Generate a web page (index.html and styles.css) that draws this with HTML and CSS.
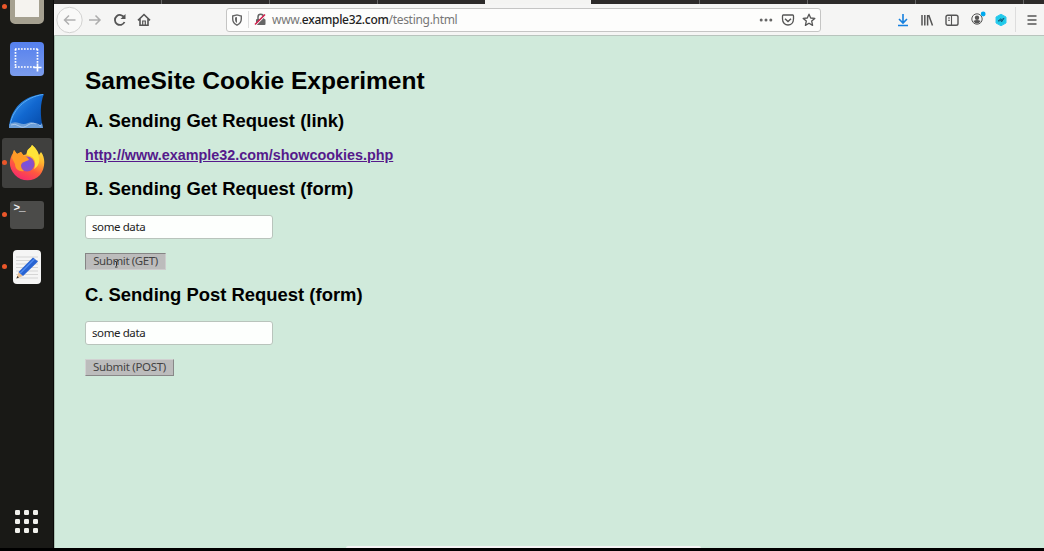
FILE: index.html
```html
<!DOCTYPE html>
<html lang="en">
<head>
<meta charset="utf-8">
<title>SameSite Cookie Experiment</title>
<link rel="stylesheet" href="styles.css">
</head>
<body>
<div class="desktop">
  <aside class="dock">
    <div class="app files"><i class="dot"></i><span class="folder"></span></div>
    <div class="app shot">
      <svg width="36" height="36" viewBox="0 0 36 36"><defs><linearGradient id="s" x2="0" y2="1"><stop stop-color="#5580ee"/><stop offset="1" stop-color="#7b9cec"/></linearGradient></defs><rect x="1" y="1" width="34" height="34" rx="4" fill="url(#s)"/><path d="M6 8H29M6 26H26M6.500 8V27M28.500 8V22" fill="none" stroke="#fff" stroke-width="1.700" stroke-dasharray="1.700 1.300"/><path d="M28.500 22.500V30.500M24.500 26.500H32.500" stroke="#fff" stroke-width="1.700"/></svg>
    </div>
    <div class="app fin">
      <svg width="38" height="36" viewBox="0 0 38 36"><defs><linearGradient id="f" x1="0" y1="0" x2="1" y2="1"><stop stop-color="#42a0f4"/><stop offset=".5" stop-color="#1268d0"/><stop offset="1" stop-color="#0548a5"/></linearGradient></defs><path d="M1 35C2 16 16 2 36 1C32 10 32 23 35 35Z" fill="url(#f)"/><path d="M2 34C3 18 17 4 35 1.500" fill="none" stroke="#5aacf3"/><path d="M1.500 31Q6 28 11 30T20 30T28 31T34 30L35 35H1Z" fill="#6d9fd8"/><path d="M3 32Q7 30 11 33T20 32T33 33" fill="none" stroke="#bad2ed" stroke-width=".8"/></svg>
    </div>
    <div class="app firefox active"><i class="dot"></i>
      <svg width="36" height="38" viewBox="0 0 36 38"><defs><linearGradient id="o" x1=".75" y1="0" x2=".3" y2="1"><stop stop-color="#fff044"/><stop offset=".35" stop-color="#ffb52e"/><stop offset=".65" stop-color="#ff593e"/><stop offset="1" stop-color="#f52770"/></linearGradient><radialGradient id="p"><stop stop-color="#7251e8"/><stop offset="1" stop-color="#9350b8"/></radialGradient></defs><path d="M23 1C28 5 29 8 30 11L32 8C37 14 36 25 31 31C25 38 12 38 6 31C-1 24 0 15 4 9L5 6L8 10L12 8L14 11C17 11 18 10 18 8C18 5 22 4 23 1Z" fill="url(#o)"/><path d="M18 8C19 5 22 4 23 1C28 6 29 9 30 14C31 20 28 23 25 25C28 18 25 13 21 12C18 11 17 10 18 8Z" fill="#ffe339"/><circle cx="18" cy="20" r="7.500" fill="url(#p)"/><path d="M5 6L8 10L12 8L15 12Q19 13 20 16Q17 17 15 18C11 19 11 24 15 27C10 28 6 25 6 20L3 14Z" fill="#ff9b27"/></svg>
    </div>
    <div class="app term"><i class="dot"></i><span class="screen">&gt;_</span></div>
    <div class="app editor"><i class="dot"></i>
      <svg width="30" height="36" viewBox="0 0 30 36"><rect x="1" y="1" width="28" height="34" rx="4" fill="#f5f5f5"/><path d="M4 8H26M4 11.500H26M4 15H26M4 18.500H26M4 22H26M4 25.500H26M4 29H26" stroke="#d5d5d5"/><path d="M4.500 29.500L6.500 23L11 27Z" fill="#eabf91"/><path d="M4.500 29.500L5.300 27L7 28.600Z" fill="#333"/><path d="M6.500 23L21 8.500L26 12.500L11 27Z" fill="#2863d2"/><path d="M8 24.500L22.500 10" stroke="#4e8af0" stroke-width="1.500"/></svg>
    </div>
    <svg class="grid" width="26" height="26" viewBox="0 0 26 26" fill="#f1f1ec"><g id="r"><rect x="1" y="1" width="5" height="5" rx="1.200"/><rect x="10" y="1" width="5" height="5" rx="1.200"/><rect x="19" y="1" width="5" height="5" rx="1.200"/></g><use href="#r" y="9"/><use href="#r" y="18"/></svg>
  </aside>
  <main class="browser">
    <div class="tabs"><i class="t1"></i><i class="t2"></i><i class="t3"></i><i class="t4"></i><i class="current"></i><i class="t5"></i><i class="t6"></i><i class="t7"></i><i class="t8"></i><i class="t9"></i></div>
    <nav class="toolbar">
      <svg class="back" width="28" height="28" viewBox="0 0 28 28" fill="none"><circle cx="14.500" cy="14" r="12.700" fill="#f9f9f8" stroke="#d2d2d1"/><path d="M20.500 14H9.500M14 9.500L9.500 14L14 18.500" stroke="#b0b0b0" stroke-width="1.500"/></svg>
      <svg class="forward" width="14" height="14" viewBox="0 0 14 14" fill="none" stroke="#adadad" stroke-width="1.500"><path d="M1 7H12M7.500 2.500L12 7L7.500 11.500"/></svg>
      <svg class="reload" width="14" height="14" viewBox="0 0 14 14" fill="none" stroke="#555" stroke-width="1.800"><path d="M11.300 4.500A5 5 0 1 0 11.500 9"/><path d="M12.500 1V6H7.500Z" fill="#555" stroke="none"/></svg>
      <svg class="home" width="14" height="14" viewBox="0 0 14 14" fill="none" stroke="#555" stroke-width="1.600"><path d="M1 7.300L7 1.500L13 7.300M3 6V12.300H11V6"/><path d="M5.700 12V8H8.300V12" stroke-width="1.200"/></svg>
      <div class="address">
        <svg class="shield" width="12" height="12" viewBox="0 0 12 12" fill="none" stroke="#666"><path d="M1.700 2L6 .9L10.300 2V5C10.300 8.500 8.500 10 6 11.200C3.500 10 1.700 8.500 1.700 5Z" stroke-width="1.400"/><path d="M6 3V9C4.500 8 4 7 4 5V3.500Z" fill="#666" stroke="none"/></svg>
        <i class="rule"></i>
        <svg class="lock" width="13" height="13" viewBox="0 0 13 13"><rect x="2" y="6" width="9.500" height="6" rx="1" fill="#666"/><path d="M4 6V4A2.700 2.700 0 0 1 9.400 4V6" fill="none" stroke="#666" stroke-width="1.500"/><path d="M1.800 12L11.800 2" stroke="#fdfdfc" stroke-width="1.200"/><path d="M1 11.500L11 1.500" stroke="#d32350" stroke-width="1.600"/></svg>
        <span class="url">www.<b>example32.com</b>/testing.html</span>
        <svg class="more" width="14" height="4" viewBox="0 0 14 4" fill="#666"><circle cx="2.200" cy="2" r="1.500"/><circle cx="7" cy="2" r="1.500"/><circle cx="11.800" cy="2" r="1.500"/></svg>
        <svg class="pocket" width="14" height="14" viewBox="0 0 14 14" fill="none" stroke="#555" stroke-width="1.300"><path d="M2.300 2H11.700Q12.500 2 12.500 3V6C12.500 14 1.500 14 1.500 6V3Q1.500 2 2.300 2Z"/><path d="M4 5.800L7 8.500L10 5.800" stroke-width="1.500"/></svg>
        <svg class="star" width="14" height="14" viewBox="0 0 14 14" fill="none" stroke="#555" stroke-width="1.300" stroke-linejoin="round"><path d="M7 1.200L8.700 5L12.800 5.400L9.700 8.100L10.600 12.400L7 10.200L3.400 12.400L4.300 8.100L1.200 5.400L5.300 5Z"/></svg>
      </div>
      <svg class="download" width="14" height="14" viewBox="0 0 14 14" fill="none" stroke="#1680df" stroke-width="1.600"><path d="M7 1V9.500M3 6L7 10L11 6M2 12.500H12"/></svg>
      <svg class="library" width="14" height="14" viewBox="0 0 14 14" fill="none" stroke="#555" stroke-width="1.500"><path d="M2 2V12.500M4.800 2V12.500M7.600 2V12.500M8.700 2L12.500 12.500"/></svg>
      <svg class="sidebar" width="14" height="14" viewBox="0 0 14 14" fill="none" stroke="#555" stroke-width="1.400"><rect x="1" y="2.200" width="12" height="10" rx="1.800"/><path d="M6.500 2V12M3 5H5M3 7.300H5" stroke-width="1.100"/></svg>
      <svg class="account" width="17" height="17" viewBox="0 0 17 17"><circle cx="7" cy="10" r="5.200" fill="none" stroke="#555"/><circle cx="7" cy="8.800" r="2.200" fill="#555"/><path d="M3.300 12Q7 10 10.700 12Q9 14.500 7 14.500T3.300 12Z" fill="#555"/><circle cx="13.200" cy="5" r="2.400" fill="#00a9ee"/></svg>
      <svg class="plugin" width="14" height="14" viewBox="0 0 14 14"><path d="M7 1.200L12 4V10L7 12.800L2 10V4Z" fill="#1fcbe9" stroke="#32c8ef" stroke-linejoin="round"/><path d="M4 8L7 5.700V7L10 5.300M10 5.300L7.500 9V7.500L4 8" fill="none" stroke="#136080" stroke-width="1"/></svg>
      <i class="divider"></i>
      <svg class="menu" width="12" height="12" viewBox="0 0 12 12" stroke="#555" stroke-width="1.400"><path d="M1.500 2H10.500M1.500 6H10.500M1.500 10H10.500"/></svg>
    </nav>
    <section class="page">
      <h1>SameSite Cookie Experiment</h1>
      <h2>A. Sending Get Request (link)</h2>
      <h3><a href="#">http://www.example32.com/showcookies.php</a></h3>
      <h2>B. Sending Get Request (form)</h2>
      <form><input type="text" value="some data"><button type="button" class="pressed">Submit (GET)</button></form>
      <h2>C. Sending Post Request (form)</h2>
      <form><input type="text" value="some data"><button type="button" class="post">Submit (POST)</button></form>
      <svg class="cursor" width="5" height="9" viewBox="0 0 5 9" fill="none" stroke="#333"><path d="M.5 2L2.500 3L4.500 1M2.500 3V7M1 8H3.500"/></svg>
      <div class="overlay-edge"></div>
    </section>
  </main>
</div>
</body>
</html>
```

FILE: styles.css
```css
* { box-sizing: border-box; }
body { margin: 0; background: #000; font-family: "Liberation Sans", sans-serif; }
.desktop { display: flex; width: 1044px; height: 551px; padding-bottom: 3px; overflow: hidden; }
svg { display: block; flex: none; }

.dock { display: flex; flex-direction: column; align-items: center; width: 54px; flex: none; background: #191916; border-right: 1px solid #090908; }
.app { position: relative; display: flex; justify-content: center; align-items: center; width: 50px; height: 50px; margin-bottom: 2px; flex: none; border-radius: 3px; }
.files { margin-top: -18px; }
.active { background: #40403e; }
.dot { position: absolute; left: 0; top: 22px; width: 5px; height: 5px; border-radius: 50%; background: #e9562a; }
.folder { width: 34px; height: 34px; margin-top: -1px; background: #f5f3ef; border: 5px solid #a5a090; border-bottom-width: 7px; border-radius: 5px; }
.screen { width: 34px; height: 28px; background: #4b4b49; border-radius: 3px; color: #eee; font: bold 11px/14px "Liberation Mono", monospace; padding-left: 4px; letter-spacing: -1px; }
.grid { margin-top: auto; margin-bottom: 13px; }

.browser { width: 990px; flex: none; display: flex; flex-direction: column; }
.tabs { height: 4px; display: flex; background: #2d2b2a; }
.tabs i { border-right: 1px solid #666; flex: none; }
.t1, .t2, .t3, .t5, .t6, .t7, .t8 { width: 108px; }
.tabs .t4 { width: 107px; border: 0; }
.tabs .current { width: 106px; background: #f4f4f2; border: 0; }
.tabs .t5 { width: 109px; }
.tabs .t9 { width: 22px; border: 0; }
.toolbar { height: 32px; display: flex; align-items: center; background: #f5f5f4; border-bottom: 1px solid #b8c4bd; padding-left: 1px; }
.forward { margin-left: 5px; }
.reload { margin-left: 11px; }
.home { margin-left: 10px; }
.address { display: flex; align-items: center; width: 595px; height: 24px; margin-left: 75px; flex: none; background: #fdfdfc; border: 1px solid #c5c5c4; border-radius: 3px; padding: 0 4px; }
.rule { width: 1px; height: 17px; background: #ddd; margin: 0 5px; }
.url { font: 12px/20px "Noto Sans", sans-serif; letter-spacing: -.3px; color: #777; margin-left: 5px; white-space: nowrap; }
.url b { color: #222; font-weight: 500; }
.more { margin-left: auto; }
.pocket { margin-left: 8px; }
.star { margin-left: 7px; }
.download { margin-left: 75px; }
.library { margin-left: 10px; }
.sidebar { margin-left: 11px; }
.account { margin-left: 11px; margin-top: -5px; }
.plugin { margin-left: 7px; }
.divider { width: 1px; height: 25px; margin-left: 7px; background: #ddd; }
.menu { margin-left: 10px; }

.page { position: relative; flex: 1; padding: 31px 31px 0 30px; background: #d0eadb; border-left: 1px solid #a9bfb0; }
h1, h2, h3, form { margin: 0; white-space: nowrap; }
h1 { font-size: 24.550px; line-height: 28px; margin-bottom: 15px; }
h2 { font-size: 18.450px; line-height: 22px; }
h3 { font-size: 14.370px; line-height: 18px; margin: 14px 0; }
a { color: #551a8b; }
form { display: flex; flex-direction: column; align-items: flex-start; padding: 15px 0 14px; }
input, button { font-family: "Noto Sans", sans-serif; font-size: 11.500px; letter-spacing: -.4px; }
input { width: 188px; height: 24px; padding: 0 6px 2px; border: 1px solid #b9c4bc; border-radius: 3px; background: #fdfffd; color: #222; }
button { width: 81px; height: 17px; margin-top: 14px; padding: 0 0 2px; background: #bcbcbc; border: 1px solid; border-color: #d1d1d1 #888 #888 #d1d1d1; color: #444; line-height: 13px; white-space: nowrap; }
.pressed { border-color: #858585 #ccc #ccc #858585; }
.post { width: 89px; letter-spacing: -.3px; }
.cursor { position: absolute; left: 59px; top: 223px; }
.overlay-edge { position: absolute; left: 291px; bottom: 0; width: 355px; height: 2px; background: #f4f4f4; border-radius: 4px 4px 0 0; }
```
